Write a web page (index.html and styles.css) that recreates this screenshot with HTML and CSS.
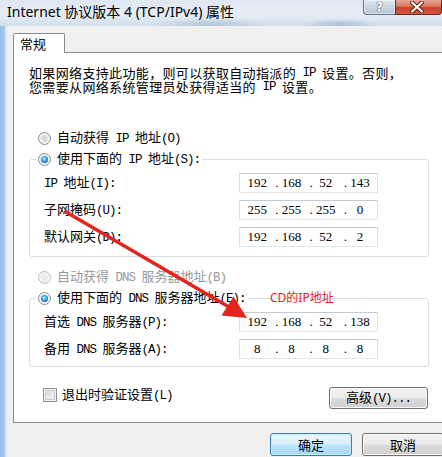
FILE: index.html
```html
<!DOCTYPE html>
<html lang="zh-CN">
<head>
<meta charset="utf-8">
<title>Internet 协议版本 4 (TCP/IPv4) 属性</title>
<link rel="stylesheet" href="styles.css">
</head>
<body>
<div class="window">
  <div class="titlebar">
    <span class="title">Internet 协议版本 4 (TCP/IPv4) 属性</span>
    <div class="caption">
      <div class="cap-help"><span class="q">?</span></div>
      <div class="cap-close">
        <svg width="16" height="12" viewBox="0 0 16 12">
          <path d="M3 1.5 L13 10.5 M13 1.5 L3 10.5" stroke="#5a1a10" stroke-width="4" stroke-linecap="round"/>
          <path d="M3 1.5 L13 10.5 M13 1.5 L3 10.5" stroke="#ffffff" stroke-width="2.2" stroke-linecap="round"/>
        </svg>
      </div>
    </div>
  </div>
  <div class="frame">
    <div class="client">
      <div class="tabs"><div class="tab">常规</div></div>
      <div class="panel">
        <p class="intro"><span class="line">如果网络支持此功能，则可以获取自动指派的<span class="en"> IP </span>设置。否则，</span><span class="line">您需要从网络系统管理员处获得适当的<span class="en"> IP </span>设置。</span></p>

        <div class="opt first"><span class="radio"></span><span>自动获得<span class="en"> IP </span>地址<span class="en">(O)</span></span></div>

        <fieldset class="group g1">
          <legend class="opt"><span class="radio on"></span><span>使用下面的<span class="en"> IP </span>地址<span class="en">(S):</span></span></legend>
          <div class="row">
            <span class="lbl"><span class="en">IP </span>地址<span class="en">(I):</span></span>
            <div class="ip"><span class="seg"><i></i><b>192</b></span><span class="seg"><i>.</i><b>168</b></span><span class="seg"><i>.</i><b>52</b></span><span class="seg"><i>.</i><b>143</b></span></div>
          </div>
          <div class="row">
            <span class="lbl">子网掩码<span class="en">(U):</span></span>
            <div class="ip"><span class="seg"><i></i><b>255</b></span><span class="seg"><i>.</i><b>255</b></span><span class="seg"><i>.</i><b>255</b></span><span class="seg"><i>.</i><b>0</b></span></div>
          </div>
          <div class="row">
            <span class="lbl">默认网关<span class="en">(D):</span></span>
            <div class="ip"><span class="seg"><i></i><b>192</b></span><span class="seg"><i>.</i><b>168</b></span><span class="seg"><i>.</i><b>52</b></span><span class="seg"><i>.</i><b>2</b></span></div>
          </div>
        </fieldset>

        <div class="opt dns disabled"><span class="radio"></span><span>自动获得<span class="en"> DNS </span>服务器地址<span class="en">(B)</span></span></div>

        <fieldset class="group g2">
          <legend class="opt"><span class="radio on"></span><span>使用下面的<span class="en"> DNS </span>服务器地址<span class="en">(E):</span></span></legend>
          <div class="row">
            <span class="lbl">首选<span class="en"> DNS </span>服务器<span class="en">(P):</span></span>
            <div class="ip"><span class="seg"><i></i><b>192</b></span><span class="seg"><i>.</i><b>168</b></span><span class="seg"><i>.</i><b>52</b></span><span class="seg"><i>.</i><b>138</b></span></div>
          </div>
          <div class="row">
            <span class="lbl">备用<span class="en"> DNS </span>服务器<span class="en">(A):</span></span>
            <div class="ip"><span class="seg"><i></i><b>8</b></span><span class="seg"><i>.</i><b>8</b></span><span class="seg"><i>.</i><b>8</b></span><span class="seg"><i>.</i><b>8</b></span></div>
          </div>
        </fieldset>

        <div class="bottom">
          <label class="chk"><span class="check"></span><span>退出时验证设置<span class="en">(L)</span></span></label>
          <button class="btn adv">高级<span class="en">(V)...</span></button>
        </div>
      </div>
      <div class="footer">
        <button class="btn default">确定</button>
        <button class="btn">取消</button>
      </div>
    </div>
  </div>

  <svg class="arrow" width="442" height="457" viewBox="0 0 442 457">
    <line x1="66" y1="212" x2="229" y2="307" stroke="#e4251e" stroke-width="3.5" stroke-linecap="round"/>
    <polygon points="247,318 221.5,315.5 233.5,296.5" fill="#e4251e"/>
  </svg>
  <span class="note">CD的IP地址</span>
</div>
</body>
</html>
```

FILE: styles.css
```css
* { box-sizing: border-box; }
html, body { margin: 0; padding: 0; }
body {
  width: 442px;
  height: 457px;
  overflow: hidden;
  background: #f0f0f0;
  font-family: "Noto Sans CJK SC", "Noto Sans", sans-serif;
  font-size: 13px;
  color: #000;
}
.window {
  position: relative;
  width: 442px;
  height: 457px;
  overflow: hidden;
  display: flex;
  flex-direction: column;
}

/* title bar */
.titlebar {
  flex: none;
  height: 26px;
  display: flex;
  justify-content: space-between;
  align-items: flex-start;
  background:
    radial-gradient(ellipse 60px 6px at 210px 24px, rgba(120,150,185,0.35), transparent),
    radial-gradient(ellipse 40px 5px at 340px 24px, rgba(90,130,180,0.35), transparent),
    linear-gradient(#dfe7f0 0%, #e6edf5 55%, #d3dfec 100%);
}
.title {
  padding-left: 7px;
  font-family: "Noto Sans", "Noto Sans CJK SC", sans-serif;
  font-size: 14px;
  line-height: 23px;
  color: #000;
  white-space: nowrap;
}
.caption { display: flex; flex: none; }
.cap-help {
  width: 32px;
  height: 15px;
  border: 1px solid #66788e;
  border-top: none;
  border-right: none;
  border-bottom-left-radius: 4px;
  background: linear-gradient(#dfe6ee 0%, #cbd6e3 50%, #b3c3d6 100%);
  box-shadow: inset 0 0 0 1px rgba(255,255,255,0.45);
  display: flex;
  justify-content: center;
  align-items: center;
}
.q {
  font-family: "DejaVu Sans", sans-serif;
  font-weight: bold;
  font-size: 12px;
  line-height: 13px;
  color: #fff;
  text-shadow: 0 0 1px #2c3c50, 0 0 1px #2c3c50;
}
.cap-close {
  width: 47px;
  height: 15px;
  border: 1px solid #6b2a20;
  border-top: none;
  border-bottom-right-radius: 4px;
  background: linear-gradient(#e8a899 0%, #d8765f 45%, #c7432b 55%, #d2583e 100%);
  display: flex;
  justify-content: center;
  align-items: center;
  padding-right: 4px;
}

/* frame */
.frame {
  flex: 1;
  display: flex;
  background: linear-gradient(to right, #97bde6 0, #a9c9ec 5px, #d9e4f0 5px, #d9e4f0 7px, transparent 7px);
  padding-left: 7px;
}
.client {
  flex: none;
  width: 449px;
  background: #f0f0f0;
  padding: 7px 6px 0 6px;
  display: flex;
  flex-direction: column;
}
.tabs { display: flex; }
.tab {
  position: relative;
  z-index: 1;
  width: 52px;
  height: 20px;
  margin-bottom: -1px;
  border: 1px solid #898c95;
  border-bottom: none;
  border-radius: 2px 2px 0 0;
  background: #fff;
  padding-left: 6px;
  line-height: 19px;
}
.panel {
  height: 371px;
  border: 1px solid #898c95;
  background: #fff;
  padding: 13px 0 0 15px;
  display: flex;
  flex-direction: column;
}
.intro {
  margin: 0;
  letter-spacing: 0.35px;
  white-space: nowrap;
}
.line {
  display: flex;
  align-items: center;
  height: 14px;
  line-height: 14px;
}
.en {
  font-family: "Liberation Mono", monospace;
  font-size: 12.5px;
  letter-spacing: -1px;
  white-space: pre;
}

/* radio options */
.opt {
  display: flex;
  align-items: center;
  height: 16px;
  line-height: 16px;
  white-space: nowrap;
}
.opt.first { margin: 36px 0 0 9px; }
.opt.dns { margin: 12px 0 0 9px; }
.opt .radio { margin-right: 6px; }
.radio {
  flex: none;
  width: 13px;
  height: 13px;
  border-radius: 50%;
  border: 1px solid #8b8c8d;
  background: radial-gradient(circle at 50% 50%, #cfcfcf 0, #e6e6e6 45%, #f8f8f8 80%);
  box-shadow: inset 0 0 0 1px #f6f6f6;
  display: flex;
  align-items: center;
  justify-content: center;
}
.radio.on::after {
  content: "";
  width: 7px;
  height: 7px;
  border-radius: 50%;
  background: radial-gradient(circle at 45% 40%, #b8f4ff 0, #48b4ea 35%, #1e6fbe 70%, #0d3f7c 100%);
}
.disabled { color: #9a9a9a; }
.disabled .radio {
  border-color: #bcbcbc;
  background: radial-gradient(circle at 50% 50%, #e6e6e6 0, #f1f1f1 50%, #fafafa 80%);
}

/* group boxes */
.group {
  width: 400px;
  margin: 5px 0 0 0;
  padding: 6px 0 9px 14px;
  border: 1px solid #d5dfe5;
  border-radius: 3px;
  min-width: 0;
}
.group.g2 { padding-bottom: 7px; }
.group legend {
  margin-left: -8px;
  padding: 0 2px;
}
.row {
  display: flex;
  align-items: center;
  height: 20px;
}
.row + .row { margin-top: 7px; }
.lbl {
  width: 195px;
  white-space: nowrap;
  line-height: 16px;
}
.ip {
  width: 139px;
  height: 20px;
  border: 1px solid;
  border-color: #c6cad0 #dde1e6 #e3e7eb #dde1e6;
  background: #fff;
  display: grid;
  grid-template-columns: repeat(4, 1fr);
  font-family: "Liberation Serif", serif;
  font-size: 13px;
  line-height: 18px;
}
.seg {
  display: grid;
  grid-template-columns: 7px 1fr 7px;
}
.seg i { font-style: normal; padding-left: 1px; }
.seg b { font-weight: normal; text-align: center; }

/* bottom row */
.bottom {
  width: 399px;
  margin-top: 20px;
  display: flex;
  justify-content: space-between;
  align-items: flex-start;
}
.chk {
  display: flex;
  align-items: center;
  height: 15px;
  line-height: 16px;
  padding-left: 14px;
  white-space: nowrap;
}
.check {
  flex: none;
  width: 14px;
  height: 14px;
  margin-right: 5px;
  border: 1px solid #8e8f8f;
  background: linear-gradient(135deg, #d3d3d3 0%, #ececec 60%, #fafafa 100%);
  box-shadow: inset 0 0 0 1px #f3f3f3, inset 0 0 0 2px #c9cbce;
}
.btn {
  font-family: "Noto Sans CJK SC", "Noto Sans", sans-serif;
  font-size: 13px;
  color: #000;
  height: 22px;
  padding: 0;
  border: 1px solid #707070;
  border-radius: 3px;
  background: linear-gradient(#f3f3f3 0%, #ebebeb 48%, #dddddd 52%, #cfcfcf 100%);
  box-shadow: inset 0 0 0 1px #fbfbfb;
  line-height: 18px;
}
.adv { width: 99px; }

.footer {
  display: flex;
  justify-content: flex-end;
  gap: 10px;
  margin-top: 10px;
  padding-right: 6px;
}
.footer .btn { width: 82px; height: 23px; }
.btn.default {
  border-color: #3c7fb1;
  background: linear-gradient(#eaf6fd 0%, #d9f0fc 48%, #bee6fd 52%, #a7d9f5 100%);
  box-shadow: inset 0 0 0 1px #c8ecfd;
}

/* annotations */
.arrow {
  position: absolute;
  left: 0;
  top: 0;
  pointer-events: none;
}
.note {
  position: absolute;
  left: 270px;
  top: 290px;
  font-family: "Noto Sans", "Noto Sans CJK SC", sans-serif;
  font-size: 12px;
  line-height: 16px;
  color: #f0201c;
}
```
